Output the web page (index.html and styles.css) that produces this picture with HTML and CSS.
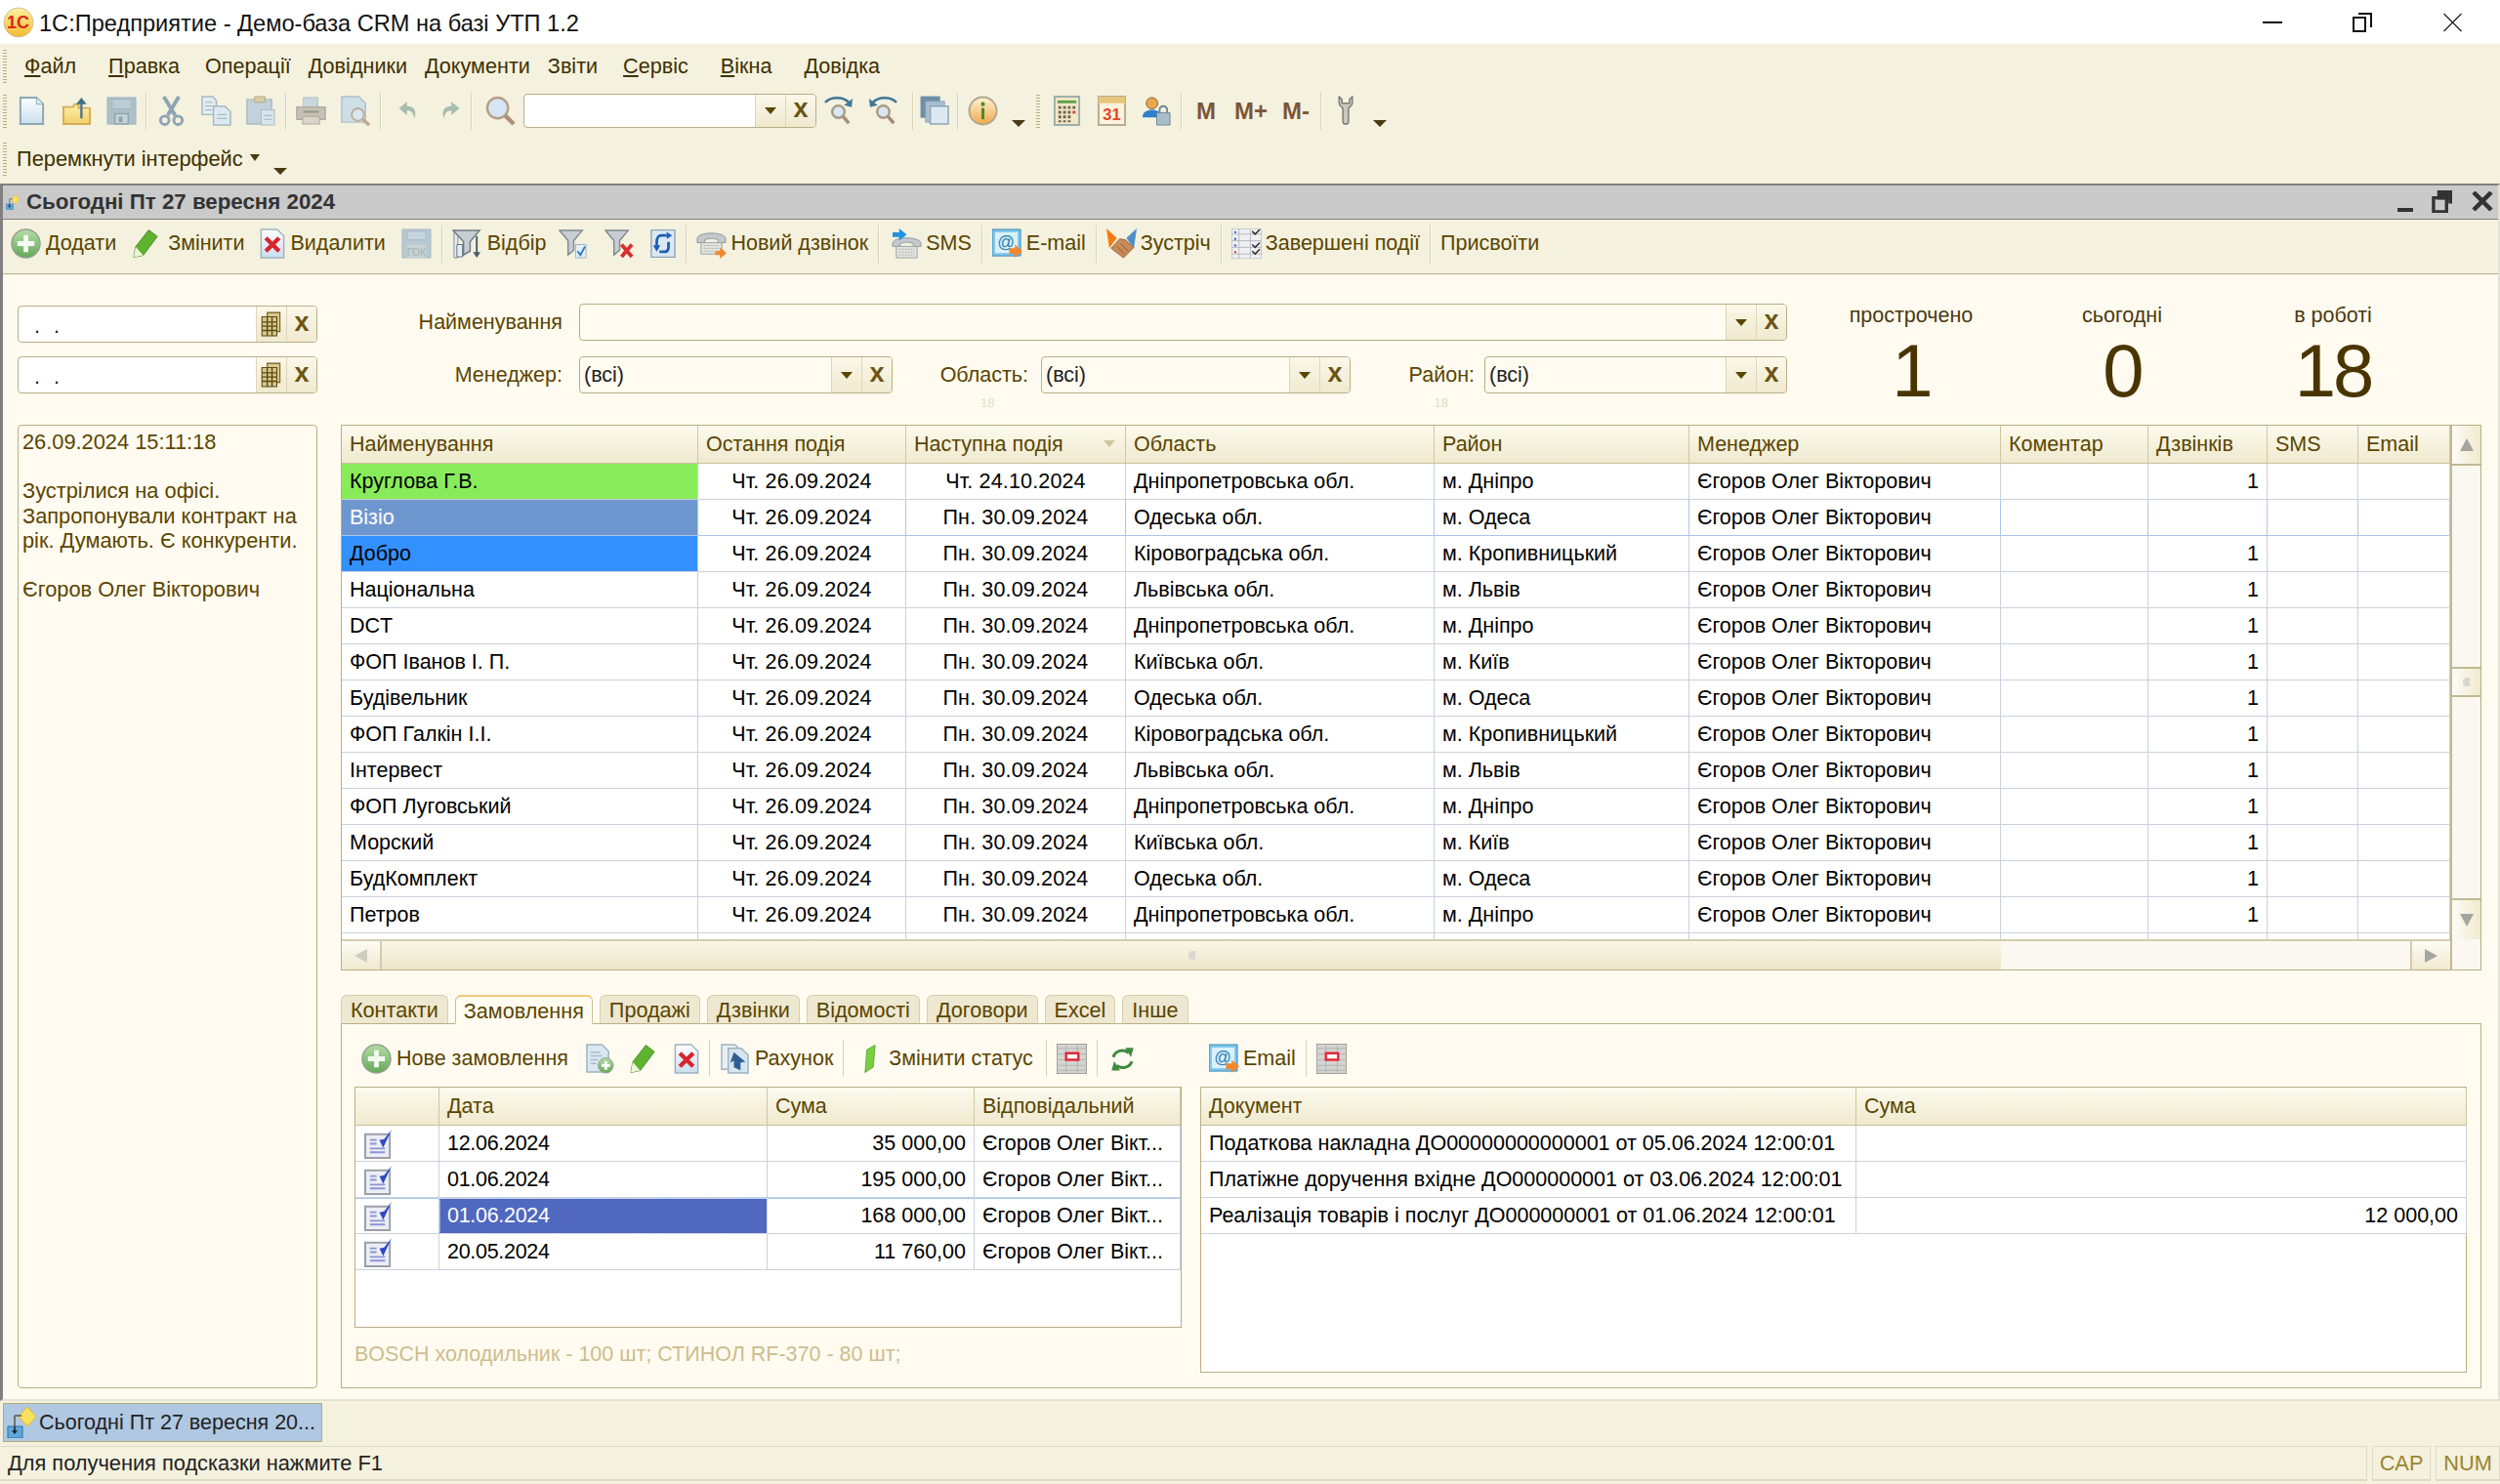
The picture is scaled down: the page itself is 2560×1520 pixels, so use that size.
FILE: index.html
```html
<!DOCTYPE html>
<html lang="uk">
<head>
    <meta charset="UTF-8">
    <title>1С:Предприятие - Демо-база CRM на базі УТП 1.2</title>
    <link rel="stylesheet" href="styles.css">
</head>
<body>
    <svg class="defs" xmlns="http://www.w3.org/2000/svg">
        <defs>
            <linearGradient id="g-green" x1="0" y1="0" x2="0" y2="1"><stop offset="0" stop-color="#b5dca6"/><stop offset="1" stop-color="#64a858"/></linearGradient>
            <linearGradient id="g-page" x1="0" y1="0" x2="0" y2="1"><stop offset="0" stop-color="#ffffff"/><stop offset="1" stop-color="#c8deee"/></linearGradient>
            <linearGradient id="g-folder" x1="0" y1="0" x2="0" y2="1"><stop offset="0" stop-color="#fff2a8"/><stop offset="1" stop-color="#f0cf6a"/></linearGradient>
            <linearGradient id="g-info" x1="0" y1="0" x2="0" y2="1"><stop offset="0" stop-color="#fff3d8"/><stop offset="1" stop-color="#efa94a"/></linearGradient>
            <linearGradient id="g-logo" x1="0" y1="0" x2="0" y2="1"><stop offset="0" stop-color="#fff2a0"/><stop offset="1" stop-color="#f2b92e"/></linearGradient>
            <symbol id="i-logo" viewBox="0 0 32 32"><circle cx="16" cy="16" r="15" fill="url(#g-logo)" stroke="#c9c19a"/><text x="15.5" y="22" text-anchor="middle" font-family="Liberation Sans" font-size="18" font-weight="700" fill="#d9281c">1С</text></symbol>
            <symbol id="i-new" viewBox="0 0 32 32"><path d="M4 2h17l7 7v21H4z" fill="url(#g-page)" stroke="#8ea6b4" stroke-width="2"/><path d="M21 2v7h7" fill="#dbe7ef" stroke="#8ea6b4"/></symbol>
            <symbol id="i-open" viewBox="0 0 32 32"><path d="M2 12h10l2-3h4v4h12v17H2z" fill="url(#g-folder)" stroke="#d2ad55" stroke-width="2"/><path d="M21 24V8" stroke="#58788a" stroke-width="2.5"/><path d="M15.500 9l5.500-7 5.500 7z" fill="#3e7088"/></symbol>
            <symbol id="i-save" viewBox="0 0 32 32"><path d="M1 2h30v28H1z" fill="#adc0ca" stroke="#9fb3be"/><path d="M6 4h20v10H6z" fill="#bccdd5" stroke="#a3b6c0"/><path d="M9 19h14v11H9z" fill="#c8d4d6" stroke="#8fa3ae" stroke-width="1.500"/><path d="M13 22h4v6h-4z" fill="#8fa3ae"/></symbol>
            <symbol id="i-cut" viewBox="0 0 32 32"><path d="M8 1l12 20M24 1L12 21" stroke="#8ea4b4" stroke-width="4" fill="none"/><circle cx="9" cy="26" r="4.500" fill="none" stroke="#8ea4b4" stroke-width="3"/><circle cx="23" cy="26" r="4.500" fill="none" stroke="#8ea4b4" stroke-width="3"/></symbol>
            <symbol id="i-copy" viewBox="0 0 32 32"><path d="M1 1h11l4 4v15H1z" fill="#e4edf1" stroke="#a4b8c4" stroke-width="1.500"/><path d="M13 11h12l6 6v14H13z" fill="#dbe9f0" stroke="#a4b8c4" stroke-width="1.500"/><path d="M4 7h8M4 11h8M4 15h8M17 20h10M17 24h10" stroke="#9cb0bc"/></symbol>
            <symbol id="i-paste" viewBox="0 0 32 32"><path d="M1 4h26v26H1z" fill="#c3d2da" stroke="#a8bbc6" stroke-width="1.500"/><path d="M9 1h11v6H9z" fill="#d7cfa9" stroke="#b0aa88"/><path d="M16 15h14v16H16z" fill="#d8e6ec" stroke="#a8bbc6"/><path d="M19 21h8M19 25h8" stroke="#9cb0bc"/></symbol>
            <symbol id="i-print" viewBox="0 0 32 32"><path d="M8 2h15v11H8z" fill="#c8d8de" stroke="#adbec8"/><path d="M1 12h30v13H1z" fill="#c6c1b6" stroke="#afa99e" stroke-width="1.500"/><path d="M7 22h18v8H7z" fill="#d9d5c9" stroke="#afa99e"/><path d="M8 17h16" stroke="#8e9a84" stroke-width="2"/></symbol>
            <symbol id="i-preview" viewBox="0 0 32 32"><path d="M1 1h18l7 7v20H1z" fill="#cfdfe8" stroke="#adc0cc" stroke-width="1.500"/><circle cx="18" cy="20" r="6.500" fill="#d8e6ef" stroke="#c2ad9a" stroke-width="2"/><path d="M23 25l7 6" stroke="#bda78e" stroke-width="3.500"/></symbol>
            <symbol id="i-undo" viewBox="0 0 32 32"><path d="M13 3L2 12l11 9v-6c6 0 9 3 10 11 4-10 0-17-10-17z" fill="#a7bbae"/></symbol>
            <symbol id="i-redo" viewBox="0 0 32 32"><path d="M19 3l11 9-11 9v-6c-6 0-9 3-10 11-4-10 0-17 10-17z" fill="#a7bbae"/></symbol>
            <symbol id="i-search" viewBox="0 0 32 32"><circle cx="13" cy="13" r="11" fill="#d7e6f5" stroke="#b3a187" stroke-width="2.500"/><path d="M21 21l9 9" stroke="#ad8f75" stroke-width="4.500"/></symbol>
            <symbol id="i-findnext" viewBox="0 0 32 32"><path d="M2 7c6-6 19-7 26 1" fill="none" stroke="#3f7896" stroke-width="2.500"/><path d="M31 3l-1 9-8-2z" fill="#3f7896"/><circle cx="16" cy="17" r="6.500" fill="#d9e7f2" stroke="#a89a88" stroke-width="2.500"/><path d="M21 22l6 7" stroke="#a58a74" stroke-width="3.500"/></symbol>
            <symbol id="i-findprev" viewBox="0 0 32 32"><path d="M30 7C24 1 11 0 4 8" fill="none" stroke="#3f7896" stroke-width="2.500"/><path d="M1 3l1 9 8-2z" fill="#3f7896"/><circle cx="16" cy="17" r="6.500" fill="#d9e7f2" stroke="#a89a88" stroke-width="2.500"/><path d="M21 22l6 7" stroke="#a58a74" stroke-width="3.500"/></symbol>
            <symbol id="i-windows" viewBox="0 0 32 32"><path d="M1 1h20v22H1z" fill="#6d8ea4" stroke="#7e9aae"/><path d="M6 6h20v22H6z" fill="#a9bfce" stroke="#8ea6b6"/><path d="M11 11h19v19H11z" fill="#dde9f2" stroke="#8ea6b6" stroke-width="1.500"/></symbol>
            <symbol id="i-info" viewBox="0 0 32 32"><circle cx="16" cy="16" r="14.500" fill="url(#g-info)" stroke="#b2a78f" stroke-width="2"/><circle cx="16" cy="9" r="2.200" fill="#4d8a2a"/><path d="M14.400 13h3.200v12h-3.200z" fill="#4d8a2a"/></symbol>
            <symbol id="i-calc" viewBox="0 0 32 32"><path d="M3 1h26v30H3z" fill="#f3e7c9" stroke="#9eb0a8" stroke-width="2"/><path d="M6 5h20v3H6z" fill="#5fa04c"/><path d="M7 11h3v3H7zM12 11h3v3h-3zM17 11h3v3h-3zM22 11h3v3h-3zM7 16h3v3H7zM12 16h3v3h-3zM17 16h3v3h-3zM7 21h3v3H7zM12 21h3v3h-3zM17 21h3v3h-3zM7 26h3v2H7zM12 26h3v2h-3zM17 26h3v2h-3z" fill="#6d6450"/><path d="M22 16h3v3h-3z" fill="#d94a30"/></symbol>
            <symbol id="i-calendar" viewBox="0 0 32 32"><path d="M2 1h28v30H2z" fill="#fbf3dc" stroke="#b7ad94" stroke-width="2"/><path d="M2 1h28v7H2z" fill="#e6c77c"/><text x="16" y="26" text-anchor="middle" font-family="Liberation Sans" font-size="17" font-weight="700" fill="#e2452f">31</text></symbol>
            <symbol id="i-user" viewBox="0 0 32 32"><circle cx="11" cy="8" r="6" fill="#e8a94c" stroke="#7d5a2a"/><path d="M1 23c0-6 5-8 10-8s10 2 10 8z" fill="#2f7fd0"/><path d="M16 18h14v13H16z" fill="#aabdca" stroke="#6f8798"/><path d="M19 18v-3a4 4 0 0 1 8 0v3" fill="none" stroke="#6f8798" stroke-width="2"/></symbol>
            <symbol id="i-wrench" viewBox="0 0 22 32"><path d="M4 1v7c0 3 3 4 4 5v14a3 3 0 0 0 6 0V13c1-1 4-2 4-5V1l-3 3v4h-8V4z" fill="#c9c9c2" stroke="#7d7d78" stroke-width="1.500"/></symbol>
            <symbol id="i-add" viewBox="0 0 32 32"><circle cx="16" cy="16" r="15" fill="url(#g-green)" stroke="#93a18f" stroke-width="1.500"/><path d="M13.500 7h5v6.500H25v5h-6.500V25h-5v-6.500H7v-5h6.500z" fill="#f4faf2"/></symbol>
            <symbol id="i-pencil" viewBox="3 1 27 31"><path d="M20 2l9 7-15 20-10 2 2-11z" fill="#5fb32f" stroke="#3f8a24"/><path d="M6 20l8 9-10 2z" fill="#eef5d8"/></symbol>
            <symbol id="i-del" viewBox="3 0 26 32"><path d="M4 1h17l7 7v23H4z" fill="url(#g-page)" stroke="#9cb3c2" stroke-width="1.500"/><path d="M9 10l14 14M23 10L9 24" stroke="#d8262c" stroke-width="4.500"/></symbol>
            <symbol id="i-disksave" viewBox="0 0 32 32"><path d="M1 1h30v30H1z" fill="#b7c9d1" stroke="#a6bac4"/><path d="M6 3h20v9H6z" fill="#c6d5db" stroke="#a6bac4"/><path d="M6 17h20v14H6z" fill="#c6d2d2"/><text x="16" y="29" text-anchor="middle" font-family="Liberation Sans" font-size="11" fill="#a4b4ba">ГОК</text></symbol>
            <symbol id="i-select" viewBox="0 0 32 32"><path d="M2 3h4v28H2z" fill="#e7eef2" stroke="#7f8b93"/><path d="M1 2h28L19 14v10l-7 4V14z" fill="#c7ced3" stroke="#6f7b83" stroke-width="1.500"/><path d="M5 17h6v13H5z" fill="#e6eef4" stroke="#5c7386"/><path d="M26 8v18" stroke="#4c5b66" stroke-width="2"/><path d="M22 25h8l-4 6z" fill="#4c5b66"/></symbol>
            <symbol id="i-filtercheck" viewBox="0 0 32 32"><path d="M1 2h24L16 13v10l-6 5V13z" fill="#c7ced3" stroke="#7f8b93" stroke-width="1.500"/><path d="M18 17h11v14H18z" fill="#e6eff6" stroke="#9cb3c2"/><path d="M20 24l3 4 5-9" fill="none" stroke="#2d7cc0" stroke-width="2"/></symbol>
            <symbol id="i-filterx" viewBox="0 0 32 32"><path d="M1 2h24L16 13v10l-6 5V13z" fill="#c7ced3" stroke="#7f8b93" stroke-width="1.500"/><path d="M18 17l11 13M29 17L18 30" stroke="#d92f2f" stroke-width="4"/></symbol>
            <symbol id="i-refreshdoc" viewBox="2 0 28 32"><path d="M3 1h26v30H3z" fill="#dbe8f2" stroke="#8fa6b8" stroke-width="1.500"/><path d="M20 7h-6c-3 0-5 3-5 7v6" fill="none" stroke="#1e5fb4" stroke-width="3"/><path d="M5 18h8l-4 7zM20 3v8l6-4z" fill="#1e5fb4"/><path d="M12 25h6c3 0 4-3 4-6v-5" fill="none" stroke="#1e5fb4" stroke-width="3"/></symbol>
            <symbol id="i-phone" viewBox="0 0 32 32"><path d="M1 11c0-8 30-8 30 0v4h-8v-3c-5-2-9-2-14 0v3H1z" fill="#c3c9cc" stroke="#8f9a9f"/><path d="M5 15h22v12H5z" fill="#e3e4dd" stroke="#9aa2a5"/><path d="M8 18h16M8 21h16M8 24h16" stroke="#a9b0b2" stroke-dasharray="2 1"/><path d="M20 24h5v-4l7 6-7 6v-4h-5z" fill="#f2872c"/></symbol>
            <symbol id="i-phonesms" viewBox="0 0 32 32"><path d="M1 16c0-8 30-8 30 0v3h-8v-3c-5-2-9-2-14 0v3H1z" fill="#c3c9cc" stroke="#8f9a9f"/><path d="M5 19h22v12H5z" fill="#e3e4dd" stroke="#9aa2a5"/><path d="M8 22h16M8 25h16M8 28h16" stroke="#a9b0b2" stroke-dasharray="2 1"/><path d="M1 4h7V0l8 6.500L8 13V9H1z" fill="#1f93e0"/></symbol>
            <symbol id="i-mail" viewBox="0 0 32 32"><path d="M0 1h30v28H0z" fill="#7bc6ec" stroke="#3c88b4"/><path d="M3 4h24v22H3z" fill="#d9f1fb"/><text x="14.500" y="21" text-anchor="middle" font-family="Liberation Sans" font-size="18" fill="#2a7fb2">@</text><path d="M18 21h6v-4l8 7-8 7v-4h-6z" fill="#f2872c"/></symbol>
            <symbol id="i-hands" viewBox="0 0 32 32"><path d="M0 0l11 10L3 21z" fill="#f57a12"/><path d="M32 0L21 10l8 11z" fill="#4f8fc8"/><path d="M5 21l9-10 6 1 9 8-11 11z" fill="#c78a5a" stroke="#9a6238"/><path d="M11 19l8 8M15 16l8 8" stroke="#8f5c34"/></symbol>
            <symbol id="i-list" viewBox="0 0 32 32"><path d="M0 0h32v32H0z" fill="#eef0f2" stroke="#a5abb0"/><path d="M0 6h32M0 13h32M0 20h32M0 27h32M8 0v32M20 0v32" stroke="#b5bbc0"/><path d="M3 3h2v2H3zM3 10h2v2H3z" fill="#2d4fd9"/><path d="M3 17h2v2H3z" fill="#2d4fd9"/><path d="M3 24h2v2H3z" fill="#e02a2a"/><path d="M22 3l3 3 5-5M22 17l3 3 5-5M22 24l3 3 5-5" fill="none" stroke="#333" stroke-width="1.600"/></symbol>
            <symbol id="i-docadd" viewBox="0 0 32 32"><path d="M3 1h16l7 7v22H3z" fill="#dbe8f0" stroke="#9cb3c2" stroke-width="1.500"/><path d="M7 9h10M7 13h12M7 17h8M7 21h6" stroke="#a8bbc6" stroke-width="1.500"/><circle cx="23" cy="23" r="8" fill="url(#g-green)" stroke="#93a18f"/><path d="M21.500 18.500h3v3h3v3h-3v3h-3v-3h-3v-3h3z" fill="#fff"/></symbol>
            <symbol id="i-invoice" viewBox="0 0 32 32"><path d="M2 1h14l6 6v20H2z" fill="#e8eff4" stroke="#9cb3c2" stroke-width="1.500"/><path d="M9 5h14l7 7v19H9z" fill="#d8e5ee" stroke="#9cb3c2" stroke-width="1.500"/><path d="M15 9l12 10-5 1v8l-7-3v-7l-4 2z" fill="#2d5f96"/></symbol>
            <symbol id="i-greenbar" viewBox="0 0 16 32"><path d="M5 6l9-5-2 24-9 6z" fill="#7ccf3c" stroke="#4a9a24" stroke-width=".8"/></symbol>
            <symbol id="i-gridred" viewBox="0 0 32 32"><path d="M0 0h32v32H0z" fill="#d4d4d0" stroke="#8f8f8a" stroke-width="1.500"/><path d="M0 5h32M10 0v32M22 0v32M0 11h32M0 17h32M0 23h32M0 28h32" stroke="#b2b2ae"/><path d="M10 10h13v7H10z" fill="#fff" stroke="#e02a3a" stroke-width="2.500"/></symbol>
            <symbol id="i-reload" viewBox="-2 -2 36 36"><path d="M5 14C7 7 17 3 23 9" fill="none" stroke="#3d8a3d" stroke-width="3.500"/><path d="M19 3h10l-3 11z" fill="#3d8a3d"/><path d="M27 19c-2 7-12 10-18 5" fill="none" stroke="#3d8a3d" stroke-width="3.500"/><path d="M13 30H3l3-11z" fill="#3d8a3d"/></symbol>
            <symbol id="i-row" viewBox="0 0 32 32"><path d="M1 6h26v25H1z" fill="#eceef5" stroke="#9a9ea6" stroke-width="2"/><path d="M6 12h7M6 16h7M6 21h16M6 25h16" stroke="#8c94d8" stroke-width="2"/><path d="M16 12l4 8 9-19-8 10z" fill="#2f48c8"/></symbol>
            <symbol id="i-caldate" viewBox="0 0 24 24"><path d="M8 1h12v18H8z" fill="#d8c98f" stroke="#6f5c1c"/><path d="M3 5h14v18H3z" fill="#d8c98f" stroke="#5a4a12"/><path d="M3 10h14M3 14h14M3 18h14M8 5v18M12.500 5v18" stroke="#5a4a12" stroke-width="1.300"/></symbol>
            <symbol id="i-task" viewBox="0 0 32 32"><path d="M21 0l9 10-9 10-9-10z" fill="#f8e060" stroke="#e3b92c"/><path d="M8 9h7M8 9v11" stroke="#555" fill="none" stroke-width="1.500"/><path d="M1 20h15v12H1z" fill="#5ea8e0" stroke="#2b6ea4"/><path d="M8 20v6" stroke="#222" stroke-width="1.500"/><path d="M5 24h6l-3 4z" fill="#222"/></symbol>
        </defs>
    </svg>

    <div class="titlebar">
        <svg class="logo"><use href="#i-logo"/></svg>
        <span class="title-text">1С:Предприятие - Демо-база CRM на базі УТП 1.2</span>
        <div class="winbtns">
            <span class="win-min"></span>
            <svg class="win-restore" viewBox="0 0 20 20"><path d="M6 1h13v14M1 5h12v14H1z" fill="none" stroke="#111" stroke-width="2"/></svg>
            <svg class="win-close" viewBox="0 0 20 20"><path d="M1 1l18 18M19 1L1 19" stroke="#222" stroke-width="1.300"/></svg>
        </div>
    </div>

    <div class="menubar">
        <span class="grip"></span>
        <span class="mi mi-first"><u>Ф</u>айл</span>
        <span class="mi mi-l"><u>П</u>равка</span>
        <span class="mi mi-m">Операції</span>
        <span class="mi">Довідники</span>
        <span class="mi">Документи</span>
        <span class="mi">Звіти</span>
        <span class="mi mi-m"><u>С</u>ервіс</span>
        <span class="mi mi-l"><u>В</u>ікна</span>
        <span class="mi mi-l"><u>Д</u>овідка</span>
    </div>

    <div class="toolbar">
        <span class="grip"></span>
        <span class="tool t-first"><svg class="ic"><use href="#i-new"/></svg></span>
        <span class="tool"><svg class="ic"><use href="#i-open"/></svg></span>
        <span class="tool"><svg class="ic"><use href="#i-save"/></svg></span>
        <span class="sep"></span>
        <span class="tool"><svg class="ic"><use href="#i-cut"/></svg></span>
        <span class="tool"><svg class="ic"><use href="#i-copy"/></svg></span>
        <span class="tool"><svg class="ic"><use href="#i-paste"/></svg></span>
        <span class="sep"></span>
        <span class="tool"><svg class="ic"><use href="#i-print"/></svg></span>
        <span class="tool"><svg class="ic"><use href="#i-preview"/></svg></span>
        <span class="sep"></span>
        <span class="tool t-narrow t-undo"><svg class="ic ic-s"><use href="#i-undo"/></svg></span>
        <span class="tool t-narrow"><svg class="ic ic-s"><use href="#i-redo"/></svg></span>
        <span class="sep"></span>
        <span class="tool t-search"><svg class="ic"><use href="#i-search"/></svg></span>
        <div class="field search-field">
            <span class="field-text"></span>
            <span class="fbtn"><span class="arrow"></span></span>
            <span class="fbtn"><span class="cross">x</span></span>
        </div>
        <span class="tool t-next"><svg class="ic"><use href="#i-findnext"/></svg></span>
        <span class="tool"><svg class="ic"><use href="#i-findprev"/></svg></span>
        <span class="sep t-winsep"></span>
        <span class="tool t-narrow"><svg class="ic"><use href="#i-windows"/></svg></span>
        <span class="sep"></span>
        <span class="tool"><svg class="ic"><use href="#i-info"/></svg></span>
        <span class="drop drop-info"></span>
        <span class="grip grip-short"></span>
        <span class="tool t-calc"><svg class="ic"><use href="#i-calc"/></svg></span>
        <span class="tool"><svg class="ic"><use href="#i-calendar"/></svg></span>
        <span class="tool"><svg class="ic"><use href="#i-user"/></svg></span>
        <span class="sep"></span>
        <span class="tool t-m">M</span>
        <span class="tool t-m">M+</span>
        <span class="tool t-m">M-</span>
        <span class="sep"></span>
        <span class="tool"><svg class="ic ic-w"><use href="#i-wrench"/></svg></span>
        <span class="drop drop-w"></span>
    </div>

    <div class="toolbar2">
        <span class="grip"></span>
        <span class="switch">Перемкнути інтерфейс</span>
        <span class="arrow switch-arrow"></span>
        <span class="drop switch-drop"></span>
    </div>

    <div class="window">
        <div class="win-head">
            <svg class="head-icon"><use href="#i-task"/></svg>
            <span class="head-title">Сьогодні Пт 27 вересня 2024</span>
            <div class="head-btns">
                <span class="hb-min"></span>
                <svg class="hb-restore" viewBox="0 0 22 24"><path d="M6 0h16v14h-4v-4H6z" fill="#333"/><path d="M2 8h14v15H2z" fill="none" stroke="#333" stroke-width="3.500"/></svg>
                <svg class="hb-close" viewBox="0 0 22 20"><path d="M2 1l18 18M20 1L2 19" stroke="#333" stroke-width="4.500"/></svg>
            </div>
        </div>

        <div class="cmdbar">
            <span class="cmd"><svg class="ic"><use href="#i-add"/></svg>Додати</span>
            <span class="cmd cmd-pen"><svg class="ic ic-p"><use href="#i-pencil"/></svg>Змінити</span>
            <span class="cmd"><svg class="ic ic-p"><use href="#i-del"/></svg>Видалити</span>
            <span class="cmd cmd-i"><svg class="ic"><use href="#i-disksave"/></svg></span>
            <span class="sep"></span>
            <span class="cmd"><svg class="ic"><use href="#i-select"/></svg>Відбір</span>
            <span class="cmd cmd-i cmd-filter"><svg class="ic"><use href="#i-filtercheck"/></svg></span>
            <span class="cmd cmd-i"><svg class="ic"><use href="#i-filterx"/></svg></span>
            <span class="cmd cmd-i"><svg class="ic ic-p"><use href="#i-refreshdoc"/></svg></span>
            <span class="sep"></span>
            <span class="cmd cmd-t"><svg class="ic"><use href="#i-phone"/></svg>Новий дзвінок</span>
            <span class="sep"></span>
            <span class="cmd cmd-t cmd-sms"><svg class="ic"><use href="#i-phonesms"/></svg>SMS</span>
            <span class="sep"></span>
            <span class="cmd cmd-t"><svg class="ic"><use href="#i-mail"/></svg>E-mail</span>
            <span class="sep"></span>
            <span class="cmd cmd-t"><svg class="ic"><use href="#i-hands"/></svg>Зустріч</span>
            <span class="sep"></span>
            <span class="cmd cmd-t"><svg class="ic"><use href="#i-list"/></svg>Завершені події</span>
            <span class="sep"></span>
            <span class="cmd">Присвоїти</span>
        </div>

        <div class="form">
            <div class="dates">
                <div class="field date-field">
                    <span class="field-text">. .</span>
                    <span class="fbtn"><svg class="cal"><use href="#i-caldate"/></svg></span>
                    <span class="fbtn"><span class="cross">x</span></span>
                </div>
                <div class="field date-field">
                    <span class="field-text">. .</span>
                    <span class="fbtn"><svg class="cal"><use href="#i-caldate"/></svg></span>
                    <span class="fbtn"><span class="cross">x</span></span>
                </div>
            </div>

            <div class="top-right">
                <div class="filters">
                    <div class="filter-row">
                        <label class="lbl lbl-first">Найменування</label>
                        <div class="field combo combo-wide">
                            <span class="field-text"></span>
                            <span class="fbtn"><span class="arrow"></span></span>
                            <span class="fbtn"><span class="cross">x</span></span>
                        </div>
                    </div>
                    <div class="filter-row">
                        <label class="lbl lbl-first">Менеджер:</label>
                        <div class="field combo combo-man">
                            <span class="field-text">(всі)</span>
                            <span class="fbtn"><span class="arrow"></span></span>
                            <span class="fbtn"><span class="cross">x</span></span>
                        </div>
                        <label class="lbl lbl-obl">Область:</label>
                        <div class="field combo combo-obl">
                            <span class="field-text">(всі)</span>
                            <span class="fbtn"><span class="arrow"></span></span>
                            <span class="fbtn"><span class="cross">x</span></span>
                        </div>
                        <label class="lbl lbl-ray">Район:</label>
                        <div class="field combo combo-ray">
                            <span class="field-text">(всі)</span>
                            <span class="fbtn"><span class="arrow"></span></span>
                            <span class="fbtn"><span class="cross">x</span></span>
                        </div>
                    </div>
                    <div class="hints">
                        <span class="hint hint-obl">18</span>
                        <span class="hint hint-ray">18</span>
                    </div>
                </div>
                <div class="counters">
                    <div class="counter"><span class="c-label">прострочено</span><span class="c-num">1</span></div>
                    <div class="counter"><span class="c-label">сьогодні</span><span class="c-num">0</span></div>
                    <div class="counter"><span class="c-label">в роботі</span><span class="c-num">18</span></div>
                </div>
            </div>

            <div class="memo">26.09.2024 15:11:18<br><br>Зустрілися на офісі.<br>Запропонували контракт на<br>рік. Думають. Є конкуренти.<br><br>Єгоров Олег Вікторович</div>

            <div class="main-col">
                <div class="grid">
                    <div class="grid-body">
                        <table class="tbl">
                            <colgroup><col class="c1"><col class="c2"><col class="c3"><col class="c4"><col class="c5"><col class="c6"><col class="c7"><col class="c8"><col class="c9"><col class="c10"></colgroup>
                            <thead>
                                <tr><th>Найменування</th><th>Остання подія</th><th class="sorted">Наступна подія<span class="sort-mark"></span></th><th>Область</th><th>Район</th><th>Менеджер</th><th>Коментар</th><th>Дзвінків</th><th>SMS</th><th>Email</th></tr>
                            </thead>
                            <tbody>
                                <tr><td class="green">Круглова Г.В.</td><td class="ctr">Чт. 26.09.2024</td><td class="ctr">Чт. 24.10.2024</td><td>Дніпропетровська обл.</td><td>м. Дніпро</td><td>Єгоров Олег Вікторович</td><td></td><td class="num">1</td><td></td><td></td></tr>
                                <tr class="cur"><td class="steel">Візіо</td><td class="ctr">Чт. 26.09.2024</td><td class="ctr">Пн. 30.09.2024</td><td>Одеська обл.</td><td>м. Одеса</td><td>Єгоров Олег Вікторович</td><td></td><td class="num"></td><td></td><td></td></tr>
                                <tr><td class="blue">Добро</td><td class="ctr">Чт. 26.09.2024</td><td class="ctr">Пн. 30.09.2024</td><td>Кіровоградська обл.</td><td>м. Кропивницький</td><td>Єгоров Олег Вікторович</td><td></td><td class="num">1</td><td></td><td></td></tr>
                                <tr><td>Національна</td><td class="ctr">Чт. 26.09.2024</td><td class="ctr">Пн. 30.09.2024</td><td>Львівська обл.</td><td>м. Львів</td><td>Єгоров Олег Вікторович</td><td></td><td class="num">1</td><td></td><td></td></tr>
                                <tr><td>DCT</td><td class="ctr">Чт. 26.09.2024</td><td class="ctr">Пн. 30.09.2024</td><td>Дніпропетровська обл.</td><td>м. Дніпро</td><td>Єгоров Олег Вікторович</td><td></td><td class="num">1</td><td></td><td></td></tr>
                                <tr><td>ФОП Іванов І. П.</td><td class="ctr">Чт. 26.09.2024</td><td class="ctr">Пн. 30.09.2024</td><td>Київська обл.</td><td>м. Київ</td><td>Єгоров Олег Вікторович</td><td></td><td class="num">1</td><td></td><td></td></tr>
                                <tr><td>Будівельник</td><td class="ctr">Чт. 26.09.2024</td><td class="ctr">Пн. 30.09.2024</td><td>Одеська обл.</td><td>м. Одеса</td><td>Єгоров Олег Вікторович</td><td></td><td class="num">1</td><td></td><td></td></tr>
                                <tr><td>ФОП Галкін І.І.</td><td class="ctr">Чт. 26.09.2024</td><td class="ctr">Пн. 30.09.2024</td><td>Кіровоградська обл.</td><td>м. Кропивницький</td><td>Єгоров Олег Вікторович</td><td></td><td class="num">1</td><td></td><td></td></tr>
                                <tr><td>Інтервест</td><td class="ctr">Чт. 26.09.2024</td><td class="ctr">Пн. 30.09.2024</td><td>Львівська обл.</td><td>м. Львів</td><td>Єгоров Олег Вікторович</td><td></td><td class="num">1</td><td></td><td></td></tr>
                                <tr><td>ФОП Луговський</td><td class="ctr">Чт. 26.09.2024</td><td class="ctr">Пн. 30.09.2024</td><td>Дніпропетровська обл.</td><td>м. Дніпро</td><td>Єгоров Олег Вікторович</td><td></td><td class="num">1</td><td></td><td></td></tr>
                                <tr><td>Морский</td><td class="ctr">Чт. 26.09.2024</td><td class="ctr">Пн. 30.09.2024</td><td>Київська обл.</td><td>м. Київ</td><td>Єгоров Олег Вікторович</td><td></td><td class="num">1</td><td></td><td></td></tr>
                                <tr><td>БудКомплект</td><td class="ctr">Чт. 26.09.2024</td><td class="ctr">Пн. 30.09.2024</td><td>Одеська обл.</td><td>м. Одеса</td><td>Єгоров Олег Вікторович</td><td></td><td class="num">1</td><td></td><td></td></tr>
                                <tr><td>Петров</td><td class="ctr">Чт. 26.09.2024</td><td class="ctr">Пн. 30.09.2024</td><td>Дніпропетровська обл.</td><td>м. Дніпро</td><td>Єгоров Олег Вікторович</td><td></td><td class="num">1</td><td></td><td></td></tr>
                                <tr><td></td><td></td><td></td><td></td><td></td><td></td><td></td><td></td><td></td><td></td></tr>
                            </tbody>
                        </table>
                    </div>
                    <div class="vscroll">
                        <span class="sb-btn sb-up"><span class="tri tri-up"></span></span>
                        <span class="sb-track sb-track-a"></span>
                        <span class="sb-thumb"><span class="dot"></span></span>
                        <span class="sb-track"></span>
                        <span class="sb-btn sb-down"><span class="tri tri-down"></span></span>
                    </div>
                    <div class="hscroll">
                        <span class="sh-btn"><span class="tri tri-left"></span></span>
                        <span class="sh-thumb"><span class="dot"></span></span>
                        <span class="sh-track"></span>
                        <span class="sh-btn"><span class="tri tri-right"></span></span>
                    </div>
                    <div class="corner"></div>
                </div>

                <div class="tabs">
                    <span class="tab">Контакти</span>
                    <span class="tab active">Замовлення</span>
                    <span class="tab">Продажі</span>
                    <span class="tab">Дзвінки</span>
                    <span class="tab">Відомості</span>
                    <span class="tab">Договори</span>
                    <span class="tab">Excel</span>
                    <span class="tab">Інше</span>
                </div>

                <div class="panel">
                    <div class="orders">
                        <div class="subbar">
                            <span class="cmd sc-first"><svg class="ic"><use href="#i-add"/></svg>Нове замовлення</span>
                            <span class="cmd cmd-i"><svg class="ic"><use href="#i-docadd"/></svg></span>
                            <span class="cmd cmd-i"><svg class="ic ic-p"><use href="#i-pencil"/></svg></span>
                            <span class="cmd cmd-i sc-del"><svg class="ic ic-p"><use href="#i-del"/></svg></span>
                            <span class="sep"></span>
                            <span class="cmd"><svg class="ic"><use href="#i-invoice"/></svg>Рахунок</span>
                            <span class="sep"></span>
                            <span class="cmd sc-status"><svg class="ic ic-bar"><use href="#i-greenbar"/></svg>Змінити статус</span>
                            <span class="sep"></span>
                            <span class="cmd cmd-i"><svg class="ic"><use href="#i-gridred"/></svg></span>
                            <span class="sep"></span>
                            <span class="cmd cmd-i"><svg class="ic"><use href="#i-reload"/></svg></span>
                        </div>
                        <div class="subgrid sub-left">
                            <table class="tbl">
                                <colgroup><col class="o1"><col class="o2"><col class="o3"><col class="o4"></colgroup>
                                <thead><tr><th></th><th>Дата</th><th>Сума</th><th>Відповідальний</th></tr></thead>
                                <tbody>
                                    <tr><td class="ico"><svg class="ic"><use href="#i-row"/></svg></td><td class="dt">12.06.2024</td><td class="num">35 000,00</td><td>Єгоров Олег Вікт...</td></tr>
                                    <tr><td class="ico"><svg class="ic"><use href="#i-row"/></svg></td><td class="dt">01.06.2024</td><td class="num">195 000,00</td><td>Єгоров Олег Вікт...</td></tr>
                                    <tr class="cur-top"><td class="ico"><svg class="ic"><use href="#i-row"/></svg></td><td class="dt sel">01.06.2024</td><td class="num">168 000,00</td><td>Єгоров Олег Вікт...</td></tr>
                                    <tr><td class="ico"><svg class="ic"><use href="#i-row"/></svg></td><td class="dt">20.05.2024</td><td class="num">11 760,00</td><td>Єгоров Олег Вікт...</td></tr>
                                </tbody>
                            </table>
                        </div>
                        <p class="note">BOSCH холодильник - 100 шт; СТИНОЛ RF-370 - 80 шт;</p>
                    </div>
                    <div class="docs">
                        <div class="subbar subbar-r">
                            <span class="cmd cmd-t"><svg class="ic"><use href="#i-mail"/></svg>Email</span>
                            <span class="sep"></span>
                            <span class="cmd cmd-i"><svg class="ic"><use href="#i-gridred"/></svg></span>
                        </div>
                        <div class="subgrid sub-right">
                            <table class="tbl">
                                <colgroup><col class="d1"><col class="d2"></colgroup>
                                <thead><tr><th>Документ</th><th>Сума</th></tr></thead>
                                <tbody>
                                    <tr><td>Податкова накладна ДО00000000000001 от 05.06.2024 12:00:01</td><td class="num"></td></tr>
                                    <tr><td>Платіжне доручення вхідне ДО000000001 от 03.06.2024 12:00:01</td><td class="num"></td></tr>
                                    <tr><td>Реалізація товарів і послуг ДО000000001 от 01.06.2024 12:00:01</td><td class="num">12 000,00</td></tr>
                                </tbody>
                            </table>
                        </div>
                    </div>
                </div>
            </div>
        </div>
    </div>

    <div class="taskbar">
        <span class="taskbtn"><svg class="task-icon"><use href="#i-task"/></svg>Сьогодні Пт 27 вересня 20...</span>
    </div>

    <div class="statusbar">
        <span class="st-main">Для получения подсказки нажмите F1</span>
        <span class="st-key st-cap">CAP</span>
        <span class="st-key st-num">NUM</span>
    </div>
</body>
</html>
```

FILE: styles.css
```css
* {
    box-sizing: border-box;
}

html, body {
    margin: 0;
    padding: 0;
}

body {
    width: 2560px;
    height: 1520px;
    overflow: hidden;
    display: flex;
    flex-direction: column;
    background: #f4f1de;
    font-family: "Liberation Sans", Arial, sans-serif;
    font-size: 21.5px;
    color: #5a4500;
}

.defs {
    width: 0;
    height: 0;
    flex: none;
}

/* title bar */
.titlebar {
    height: 45px;
    flex: none;
    background: #fff;
    display: flex;
    align-items: center;
    padding-left: 3px;
}

.logo {
    width: 32px;
    height: 32px;
}

.title-text {
    margin-left: 5px;
    margin-top: 3px;
    font-size: 23.6px;
    color: #111;
}

.winbtns {
    margin-left: auto;
    display: flex;
    align-items: center;
    padding-right: 38px;
}

.win-min {
    width: 20px;
    height: 2px;
    background: #111;
}

.win-restore {
    width: 20px;
    height: 20px;
    margin-left: 72px;
}

.win-close {
    width: 21px;
    height: 20px;
    margin-left: 72px;
}

/* menu and toolbars */
.grip {
    width: 4px;
    height: 34px;
    flex: none;
    margin-left: 3px;
    background: repeating-linear-gradient(to bottom, #b9ad85 0 1px, #f4f1de 1px 3px);
}

.menubar {
    height: 45px;
    flex: none;
    display: flex;
    align-items: center;
    font-size: 21.6px;
    color: #3e3000;
}

.mi {
    margin-left: 18px;
}

.mi-first {
    margin-left: 18px;
}

.mi-m {
    margin-left: 26px;
}

.mi-l {
    margin-left: 33px;
}

.mi u {
    text-underline-offset: 2px;
}

.toolbar {
    height: 47px;
    flex: none;
    display: flex;
    align-items: center;
}

.tool {
    width: 46px;
    height: 36px;
    flex: none;
    display: flex;
    align-items: center;
    justify-content: center;
}

.t-first {
    margin-left: 2px;
}

.t-narrow {
    width: 41px;
}

.t-undo {
    margin-left: 6px;
}

.t-search {
    width: 44px;
    justify-content: flex-start;
    margin-left: 12px;
    margin-right: -5px;
}

.t-next {
    margin-left: -1px;
}

.sep.t-winsep {
    margin-left: 7px;
}

.t-calc {
    margin-left: 4px;
}

.t-m {
    font-weight: 700;
    font-size: 24px;
    color: #7d5534;
}

.ic {
    width: 31px;
    height: 31px;
    flex: none;
}

.ic-s {
    width: 24px;
    height: 24px;
}

.ic-p {
    width: 26px;
}

.ic-w {
    width: 22px;
}

.ic-bar {
    width: 15px;
}

.sep {
    width: 1px;
    height: 38px;
    flex: none;
    margin: 0 2px;
    background: #d9d3b6;
    box-shadow: 1px 0 0 #fbf9ee;
}

.drop {
    width: 0;
    height: 0;
    flex: none;
    margin-left: -8px;
    margin-top: 26px;
    border-left: 7px solid transparent;
    border-right: 7px solid transparent;
    border-top: 7px solid #4a3a10;
}

.drop-info {
    margin-left: 7px;
}

.grip-short {
    margin-left: 11px;
}

.drop-w {
    margin-left: 5px;
}

.toolbar2 {
    height: 51px;
    flex: none;
    display: flex;
    align-items: center;
}

.switch {
    margin-left: 10px;
    font-size: 21.8px;
    color: #3e3000;
}

.arrow {
    width: 0;
    height: 0;
    border-left: 6px solid transparent;
    border-right: 6px solid transparent;
    border-top: 7px solid #5a4500;
}

.switch-arrow {
    margin-left: 7px;
    margin-top: -3px;
    border-left-width: 5px;
    border-right-width: 5px;
    border-top-color: #4a3a10;
}

.switch-drop {
    margin-left: 14px;
    margin-top: 26px;
}

/* fields */
.field {
    height: 38px;
    display: flex;
    border: 1px solid #b9ae86;
    border-radius: 4px;
    background: #fffbf0;
    overflow: hidden;
}

.field-text {
    flex: 1;
    padding-left: 4px;
    line-height: 36px;
    color: #222;
}

.fbtn {
    width: 31px;
    flex: none;
    display: flex;
    align-items: center;
    justify-content: center;
    border-left: 1px solid #ddd6b8;
    background: linear-gradient(to bottom, #fbf8ea, #efe9ce);
}

.cross {
    font-weight: 700;
    font-size: 27px;
    line-height: 30px;
    margin-top: -5px;
    color: #6b5514;
}

.cal {
    width: 26px;
    height: 26px;
}

.search-field {
    width: 300px;
    height: 35px;
    flex: none;
    background: #fff;
}

.date-field {
    background: #fff;
}

.date-field .field-text {
    padding-left: 16px;
    word-spacing: 8px;
    line-height: 40px;
}

/* mdi window */
.window {
    height: 1247px;
    flex: none;
    display: flex;
    flex-direction: column;
    border-top: 2px solid #808080;
    border-bottom: 2px solid #e4e2d6;
    border-left: 3px solid #808080;
    border-right: 2px solid #e4e2d6;
}

.win-head {
    height: 35px;
    flex: none;
    display: flex;
    align-items: center;
    background: #cacaca;
    border-bottom: 1px solid #808080;
}

.head-icon {
    width: 15px;
    height: 16px;
    margin-left: 3px;
}

.head-title {
    margin-left: 6px;
    font-size: 22.3px;
    font-weight: 700;
    color: #333;
}

.head-btns {
    margin-left: auto;
    height: 100%;
    display: flex;
    align-items: center;
}

.hb-min {
    width: 16px;
    height: 4px;
    margin-top: 16px;
    background: #333;
}

.hb-restore {
    width: 21px;
    height: 23px;
    margin-left: 19px;
    margin-top: -2px;
}

.hb-close {
    width: 22px;
    height: 20px;
    margin-left: 20px;
    margin-right: 5px;
    margin-top: -2px;
}

.cmdbar {
    height: 55px;
    flex: none;
    display: flex;
    align-items: center;
    padding-bottom: 6px;
}

.cmd {
    height: 34px;
    flex: none;
    display: flex;
    align-items: center;
    gap: 5px;
    padding: 0 8px;
}

.cmd-pen {
    gap: 10px;
    padding-left: 9px;
}

.cmd-i {
    padding: 0 8px;
}

.cmd-filter {
    margin-left: -3px;
}

.cmd-t {
    padding: 0 8px;
    gap: 4px;
}

.cmd-sms {
    margin-left: 3px;
}

/* form */
.form {
    flex: 1;
    min-height: 0;
    display: grid;
    grid-template-columns: 307px 2192px;
    grid-template-rows: 154px 1fr;
    column-gap: 24px;
    padding: 0 17px 11px 15px;
    background: #fffbf0;
    border-top: 1px solid #b9ae86;
}

.dates {
    padding-top: 32px;
    display: flex;
    flex-direction: column;
    gap: 14px;
}

.top-right {
    display: flex;
}

.filters {
    width: 1481px;
    flex: none;
    padding-top: 30px;
    display: flex;
    flex-direction: column;
    gap: 16px;
}

.filter-row {
    display: flex;
    align-items: center;
}

.lbl {
    text-align: right;
    flex: none;
}

.lbl-first {
    width: 227px;
    margin-right: 17px;
}

.lbl-obl {
    width: 139px;
    margin-right: 13px;
}

.lbl-ray {
    width: 127px;
    margin-right: 10px;
}

.combo-wide {
    width: 1237px;
}

.combo-man {
    width: 321px;
}

.combo-obl {
    width: 317px;
}

.combo-ray {
    width: 310px;
}

.hints {
    height: 14px;
    margin-top: -14px;
    display: flex;
    font-size: 13px;
    color: #e3dcc4;
}

.hint-obl {
    margin-left: 655px;
}

.hint-ray {
    margin-left: 450px;
}

.counters {
    margin-left: 19px;
    padding-top: 31px;
    display: flex;
}

.counter {
    width: 216px;
    display: flex;
    flex-direction: column;
    align-items: center;
}

.c-label {
    line-height: 22px;
    color: #4a3a10;
}

.c-num {
    margin-top: 8px;
    font-size: 76px;
    line-height: 76px;
    letter-spacing: -3px;
    color: #4a3500;
}

.memo {
    border: 1px solid #b9ae86;
    border-radius: 4px;
    padding: 4px 4px;
    font-size: 21.8px;
    line-height: 25.2px;
}

.main-col {
    display: flex;
    flex-direction: column;
    min-height: 0;
}

/* tables */
.tbl {
    table-layout: fixed;
    border-collapse: separate;
    border-spacing: 0;
    width: 100%;
}

.tbl th {
    height: 39px;
    padding: 0 8px;
    text-align: left;
    font-weight: 400;
    white-space: nowrap;
    color: #5a4500;
    background: linear-gradient(to bottom, #fcfaee, #efe9ce);
    border-right: 1px solid #cfc6a0;
    border-bottom: 1px solid #c9bf99;
}

.tbl td {
    height: 37px;
    padding: 1px 8px 0;
    white-space: nowrap;
    overflow: hidden;
    color: #000;
    background: #fff;
    border-right: 1px solid #c9d1dc;
    border-bottom: 1px solid #c9d1dc;
}

.tbl .ctr {
    text-align: center;
    letter-spacing: .15px;
}

.tbl .dt {
    letter-spacing: -.3px;
}

.tbl .num {
    text-align: right;
}

.tbl .green {
    background: #88ec5a;
}

.tbl .steel {
    background: #6f97cf;
    color: #fff;
}

.tbl .blue {
    background: #3391ff;
}

.tbl .cur td {
    border-bottom-color: #a9c6ea;
    border-right-color: #a9c6ea;
}

.tbl .cur-top td {
    box-shadow: inset 0 1px 0 #a9c6ea;
}

.tbl .sel {
    background: #5068c0;
    color: #fff;
    outline: 1px dotted #dfe4f6;
    outline-offset: -1px;
}

.tbl .ico {
    padding: 0 0 0 9px;
}

.tbl .ico svg {
    display: block;
}

.sorted {
    position: relative;
}

.sort-mark {
    position: absolute;
    right: 10px;
    top: 15px;
    width: 0;
    height: 0;
    border-left: 6px solid transparent;
    border-right: 6px solid transparent;
    border-top: 7px solid #cfc6a0;
}

.c1 { width: 365px; }
.c2 { width: 213px; }
.c3 { width: 225px; }
.c4 { width: 316px; }
.c5 { width: 261px; }
.c6 { width: 319px; }
.c7 { width: 151px; }
.c8 { width: 122px; }
.c9 { width: 93px; }
.c10 { width: 94px; }

.o1 { width: 86px; }
.o2 { width: 336px; }
.o3 { width: 212px; }
.o4 { width: 211px; }

.d1 { width: 671px; }
.d2 { width: 625px; }

.grid {
    height: 559px;
    flex: none;
    display: grid;
    grid-template-columns: 2159px 1fr;
    grid-template-rows: 526px 31px;
    border: 1px solid #b9ae86;
    background: #fff;
}

.grid-body {
    overflow: hidden;
}

.vscroll {
    display: flex;
    flex-direction: column;
    background: #faf8f0;
    border-left: 2px solid #c2b992;
}

.sb-btn {
    flex: none;
    display: flex;
    align-items: center;
    justify-content: center;
    background: linear-gradient(to right, #fdfcf6, #efe9ce);
}

.sb-up {
    height: 41px;
    border-bottom: 2px solid #c2b992;
}

.sb-down {
    height: 42px;
    border-top: 2px solid #c2b992;
}

.sb-track {
    flex: 1;
}

.sb-track-a {
    flex: none;
    height: 206px;
}

.sb-thumb {
    height: 31px;
    flex: none;
    display: flex;
    align-items: center;
    justify-content: center;
    background: linear-gradient(to right, #fdfcf6, #efe9ce);
    border-top: 2px solid #c2b992;
    border-bottom: 2px solid #c2b992;
}

.tri {
    width: 0;
    height: 0;
}

.tri-up {
    border-left: 7px solid transparent;
    border-right: 7px solid transparent;
    border-bottom: 13px solid #a5a5a0;
}

.tri-down {
    border-left: 7px solid transparent;
    border-right: 7px solid transparent;
    border-top: 13px solid #a5a5a0;
}

.tri-left {
    border-top: 7px solid transparent;
    border-bottom: 7px solid transparent;
    border-right: 13px solid #cfcdc0;
}

.tri-right {
    border-top: 7px solid transparent;
    border-bottom: 7px solid transparent;
    border-left: 13px solid #a5a5a0;
}

.dot {
    width: 7px;
    height: 9px;
    border-radius: 4px 0 0 4px;
    background: #d8d8d0;
}

.hscroll {
    display: flex;
    background: #faf8f0;
    border-top: 2px solid #d3ccaf;
}

.sh-btn {
    width: 41px;
    flex: none;
    display: flex;
    align-items: center;
    justify-content: center;
    background: linear-gradient(to bottom, #fdfcf6, #efe9ce);
    border-right: 2px solid #d3ccaf;
}

.sh-btn:last-child {
    border-right: none;
    border-left: 2px solid #d3ccaf;
}

.sh-thumb {
    width: 1658px;
    flex: none;
    display: flex;
    align-items: center;
    justify-content: center;
    background: linear-gradient(to bottom, #f9f6e6, #ebe5c8);
}

.sh-track {
    flex: 1;
}

.corner {
    background: #faf8f0;
    border-left: 2px solid #c2b992;
}

/* tabs */
.tabs {
    height: 30px;
    flex: none;
    margin-top: 25px;
    display: flex;
    gap: 7px;
    padding-top: 0;
    border-bottom: 1px solid #b9ae86;
    font-size: 21.6px;
}

.tab {
    height: 30px;
    padding: 0 9px;
    line-height: 30px;
    background: #eee8d0;
    border: 1px solid #d5ceb0;
    border-bottom: 1px solid #b9ae86;
    border-radius: 6px 6px 0 0;
}

.tab.active {
    padding: 0 8px;
    background: #fffbf0;
    border-color: #c9bf99;
    border-top: 2px solid #f2c878;
    border-bottom-color: #fffbf0;
}

.panel {
    flex: 1;
    min-height: 0;
    display: grid;
    grid-template-columns: 847px 1fr;
    column-gap: 19px;
    padding: 0 14px 15px 13px;
    border: 1px solid #b9ae86;
    border-top: none;
}

.orders, .docs {
    display: flex;
    flex-direction: column;
    min-width: 0;
}

.subbar {
    height: 64px;
    flex: none;
    display: flex;
    align-items: center;
    padding-top: 6px;
}

.sc-first {
    padding-left: 7px;
}

.sc-del {
    margin-left: 3px;
}

.sc-status {
    gap: 12px;
    padding-left: 17px;
    padding-right: 11px;
}

.subbar-r {
    padding-left: 1px;
}

.subgrid {
    flex: none;
    border: 1px solid #b9ae86;
    background: #fff;
}

.sub-left {
    height: 247px;
}

.sub-right {
    flex: 1;
}

.note {
    margin: 15px 0 0;
    color: #cdbd8e;
}

/* bottom bars */
.taskbar {
    height: 46px;
    flex: none;
    padding: 2px 0 0 3px;
}

.taskbtn {
    width: 327px;
    height: 40px;
    display: flex;
    align-items: center;
    gap: 1px;
    padding-left: 3px;
    background: #b0c8e2;
    border: 1px solid #b5ab7a;
    color: #222;
    white-space: nowrap;
}

.task-icon {
    width: 32px;
    height: 32px;
    flex: none;
}

.statusbar {
    height: 36px;
    flex: none;
    display: flex;
    gap: 5px;
    font-size: 21.8px;
}

.st-main, .st-key {
    display: flex;
    align-items: center;
    border: 1px solid #dedbc4;
    border-width: 1px 1px 2px 0;
}

.st-main {
    width: 2425px;
    padding-left: 8px;
    color: #222;
}

.st-key {
    justify-content: center;
    border-left-width: 1px;
    color: #9a8430;
}

.st-cap {
    width: 60px;
}

.st-num {
    width: 66px;
}
```
